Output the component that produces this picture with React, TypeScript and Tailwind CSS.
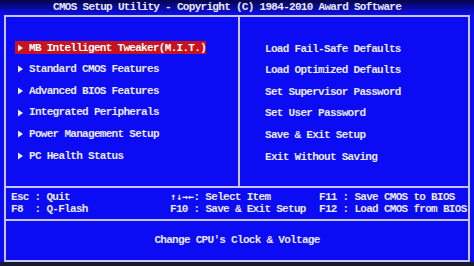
const leftItems = [
  'MB Intelligent Tweaker(M.I.T.)',
  'Standard CMOS Features',
  'Advanced BIOS Features',
  'Integrated Peripherals',
  'Power Management Setup',
  'PC Health Status',
];

const rightItems = [
  'Load Fail-Safe Defaults',
  'Load Optimized Defaults',
  'Set Supervisor Password',
  'Set User Password',
  'Save & Exit Setup',
  'Exit Without Saving',
];

function Arrow() {
  return (
    <svg width="12" height="8" viewBox="0 0 12 8" className="shrink-0">
      <path d="M1 0.5 L6 4 L1 7.5 Z" fill="#ececf4" />
    </svg>
  );
}

function Keys() {
  return (
    <span className="inline-flex">
      {['↑', '↓', '→', '←'].map((c) => (
        <span key={c} className="inline-block w-[5.9px] text-center font-['DejaVu_Sans_Mono',monospace] text-[10px] tracking-normal">
          {c}
        </span>
      ))}
    </span>
  );
}

export default function App() {
  return (
    <div className="w-[474px] h-[266px] overflow-hidden bg-[#0c0cf4] font-['Liberation_Mono',monospace] font-bold text-[11px] tracking-[-0.7px] text-[#e9e9f3] flex flex-col">
      <div className="h-[15px] shrink-0 bg-gradient-to-b from-[#05054a] to-[#0c0cf4] pl-[53px] leading-[15px] whitespace-pre">
        CMOS Setup Utility - Copyright (C) 1984-2010 Award Software
      </div>

      <div className="mx-[4px] h-[247px] shrink-0 border-2 border-[#c4c6f4] flex flex-col">
        <div className="h-[169px] shrink-0 flex">
          <div className="w-[234px] shrink-0 border-r-2 border-[#c4c6f4] pt-[20px] pl-[9px] flex flex-col">
            {leftItems.map((item, i) => (
              <div key={item} className="h-[21.6px] flex items-center">
                <span
                  className={
                    'h-[13px] pl-[2px] flex items-center whitespace-pre ' +
                    (i === 0 ? 'bg-[#c8121e] text-white' : '')
                  }
                >
                  <Arrow />
                  {item}
                </span>
              </div>
            ))}
          </div>
          <div className="flex-1 pt-[21px] pl-[25px] flex flex-col">
            {rightItems.map((item) => (
              <div key={item} className="h-[21.6px] flex items-center whitespace-pre">
                {item}
              </div>
            ))}
          </div>
        </div>

        <div className="h-[33px] shrink-0 border-t-2 border-[#c4c6f4] pt-[3px] pl-[5px] flex leading-[12px] whitespace-pre">
          <div className="w-[159px] shrink-0 flex flex-col">
            <span>Esc : Quit</span>
            <span>F8  : Q-Flash</span>
          </div>
          <div className="w-[149px] shrink-0 flex flex-col">
            <span>
              <Keys />: Select Item
            </span>
            <span>F10 : Save &amp; Exit Setup</span>
          </div>
          <div className="flex-1 flex flex-col">
            <span>F11 : Save CMOS to BIOS</span>
            <span>F12 : Load CMOS from BIOS</span>
          </div>
        </div>

        <div className="flex-1 border-t-2 border-[#c4c6f4] flex items-center justify-center whitespace-pre">
          Change CPU's Clock &amp; Voltage
        </div>
      </div>

      <div className="flex-1 bg-[#1a1a2e]" />
    </div>
  );
}
